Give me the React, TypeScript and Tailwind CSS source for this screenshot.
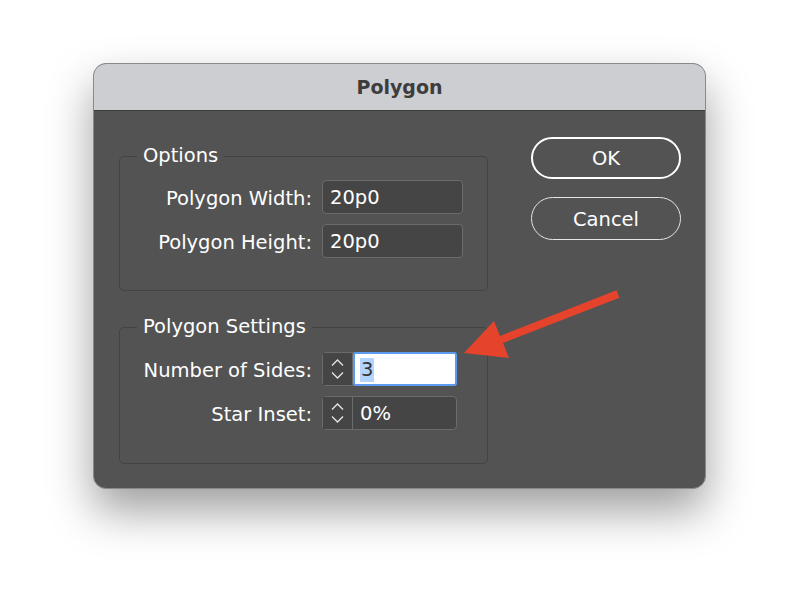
import React from "react";

const font = { fontFamily: '"DejaVu Sans", "Liberation Sans", sans-serif' };

function Field({ value }: { value: string }) {
  return (
    <div className="flex h-[34px] w-[141px] items-center rounded-[4px] border border-[#6b6b6b] bg-[#454545] pl-[7px] pt-[2px] text-[19.5px] text-white">
      {value}
    </div>
  );
}

function Spinner() {
  return (
    <div className="flex h-full w-[30px] flex-col items-center justify-center gap-[6px] border-r border-[#6b6b6b] bg-[#454545]">
      <svg width="13" height="7" viewBox="0 0 13 7" fill="none">
        <path d="M1 6.5l5.5-5.5 5.5 5.5" stroke="#e6e6e6" strokeWidth="1.3" />
      </svg>
      <svg width="13" height="7" viewBox="0 0 13 7" fill="none">
        <path d="M1 0.5l5.5 5.5 5.5-5.5" stroke="#e6e6e6" strokeWidth="1.3" />
      </svg>
    </div>
  );
}

function SpinField({ value, focused }: { value: string; focused?: boolean }) {
  return (
    <div className="flex h-[34px] w-[135px] rounded-[4px] border border-[#6b6b6b] bg-[#454545]">
      <Spinner />
      {focused ? (
        <div className="-my-px -mr-px flex flex-1 items-center rounded-[3px] border-2 border-[#5c9cf0] bg-white pl-[5px] pt-[2px]">
          <span className="bg-[#b3d4fc] px-[1px] text-[19.5px] leading-[24px] text-[#333]">{value}</span>
        </div>
      ) : (
        <div className="flex flex-1 items-center pl-[7px] pt-[2px] text-[19.5px] text-white">{value}</div>
      )}
    </div>
  );
}

function Row({ label, children }: { label: string; children: React.ReactNode }) {
  return (
    <div className="flex items-center">
      <div className="w-[202px] pr-[10px] pt-[3px] text-right text-[19.5px] text-white">{label}</div>
      {children}
    </div>
  );
}

function Group({ title, children, className }: { title: string; children: React.ReactNode; className?: string }) {
  return (
    <fieldset className={"w-[369px] rounded-[5px] border border-[#434343] " + (className ?? "")}>
      <legend className="ml-[17px] px-[6px] text-[19.5px] leading-[24px] text-white">{title}</legend>
      {children}
    </fieldset>
  );
}

export default function App() {
  return (
    <div className="min-h-[613px] w-[800px] bg-white pl-[93px] pt-[63px]" style={font}>
      <div className="relative w-[613px] overflow-hidden rounded-[13px] border border-[#8a8a8a] bg-[#535353] shadow-[0_22px_45px_rgba(0,0,0,0.38)]">
        <div className="flex h-[47px] items-center justify-center border-b border-[#3c3c3c] bg-[#cdced2] text-[19px] font-bold text-[#3d3d3d]">
          Polygon
        </div>
        <div className="flex pb-[24px] pl-[25px] pr-[25px]">
          <div className="flex flex-col">
            <Group title="Options" className="mt-[33px] pb-[32px]">
              <div className="flex flex-col gap-[10px] pt-[12px]">
                <Row label="Polygon Width:">
                  <Field value="20p0" />
                </Row>
                <Row label="Polygon Height:">
                  <Field value="20p0" />
                </Row>
              </div>
            </Group>
            <Group title="Polygon Settings" className="mt-[24px] pb-[33px]">
              <div className="flex flex-col gap-[10px] pt-[13px]">
                <Row label="Number of Sides:">
                  <SpinField value="3" focused />
                </Row>
                <Row label="Star Inset:">
                  <SpinField value="0%" />
                </Row>
              </div>
            </Group>
          </div>
          <div className="ml-[43px] flex flex-col gap-[18px] pt-[26px]">
            <button className="flex h-[42px] w-[150px] items-center justify-center rounded-full border-[2.5px] border-white pt-[2px] text-[19.5px] text-white">
              OK
            </button>
            <button className="flex h-[43px] w-[150px] items-center justify-center rounded-full border-[1.5px] border-[#e5e5e5] pt-[2px] text-[19.5px] text-white">
              Cancel
            </button>
          </div>
        </div>
        <svg className="absolute left-0 top-0" width="613" height="425" viewBox="0 0 613 425">
          <polygon
            points="370,289 400,257 406,272 522.6,226.3 525.4,233.7 409,279 415,294"
            fill="#e5432b"
          />
        </svg>
      </div>
    </div>
  );
}
